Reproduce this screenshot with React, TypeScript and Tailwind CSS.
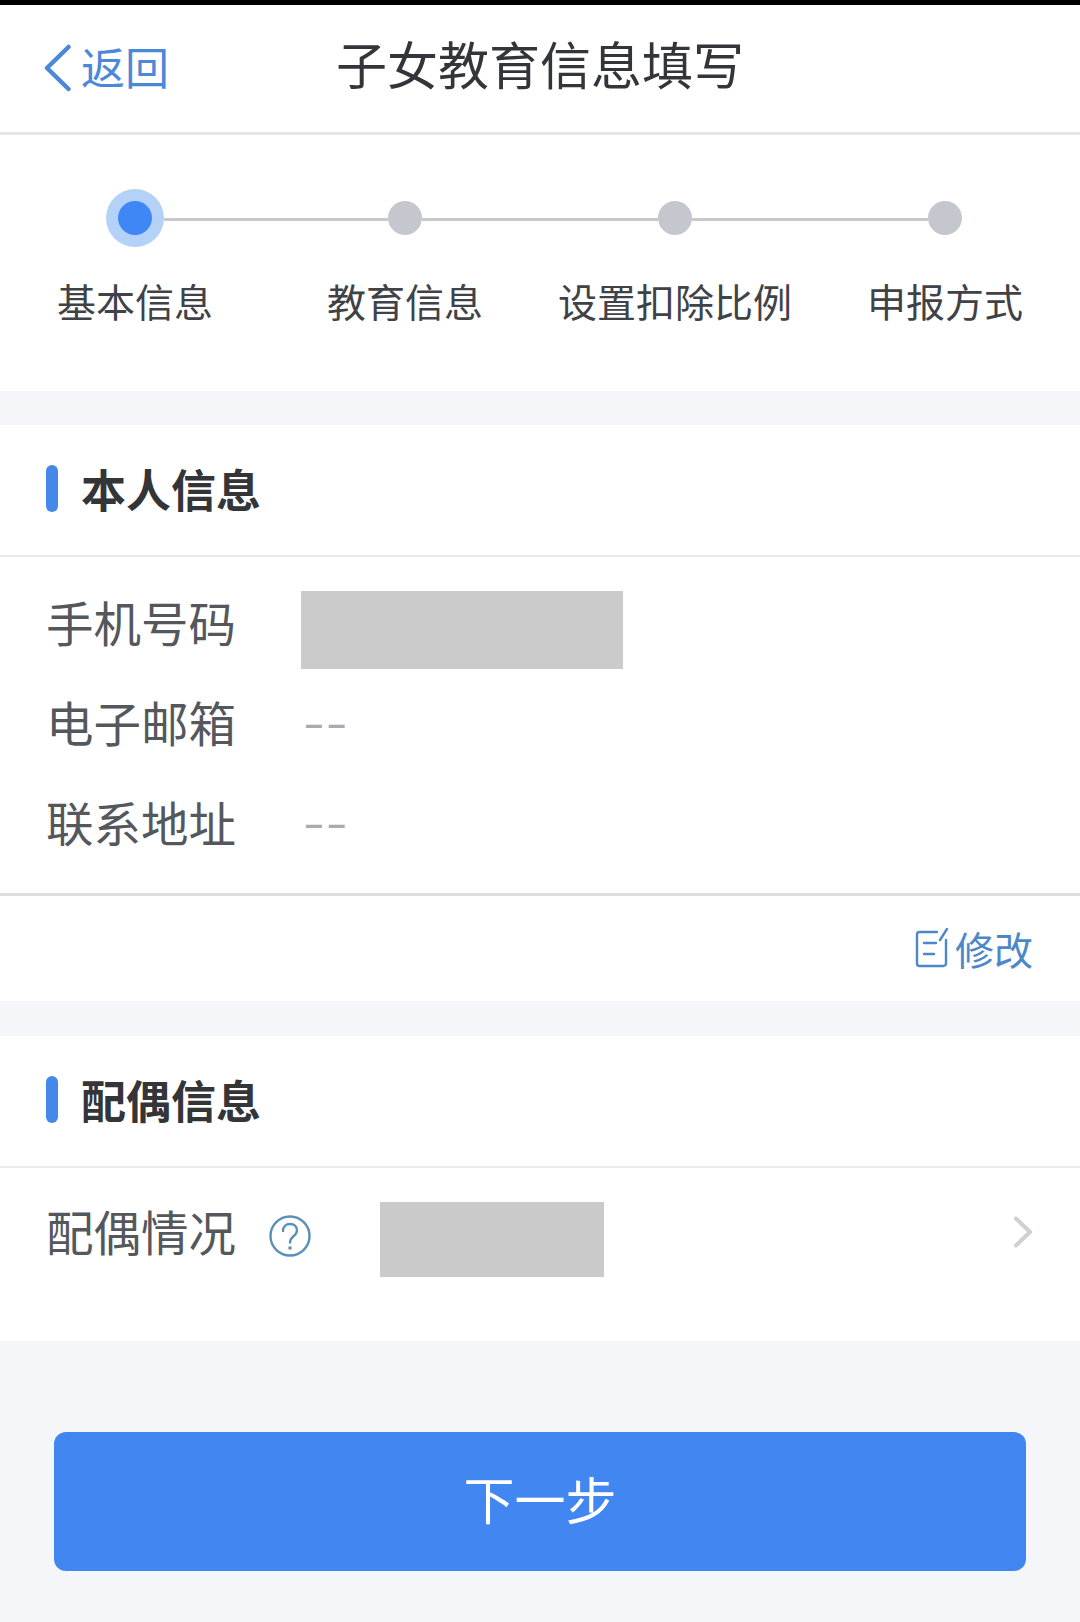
const font = { fontFamily: '"Noto Sans CJK SC", "Noto Sans", sans-serif' };

function Step({ label, active, first, last }: { label: string; active?: boolean; first?: boolean; last?: boolean }) {
  return (
    <div className="flex flex-col items-center">
      <div className="flex h-[57px] w-full items-center">
        <div className={`mt-[3px] h-[3px] flex-1 ${first ? "" : "bg-[#c6c8cc]"}`} />
        {active ? (
          <div className="flex h-[58px] w-[58px] items-center justify-center rounded-full bg-[#b4d2f8]">
            <div className="h-[34px] w-[34px] rounded-full bg-[#3f87f5]" />
          </div>
        ) : (
          <div className="h-[34px] w-[34px] rounded-full bg-[#c4c7cd]" />
        )}
        <div className={`mt-[3px] h-[3px] flex-1 ${last ? "" : "bg-[#c6c8cc]"}`} />
      </div>
      <div className="mt-[32px] whitespace-nowrap text-[39px] leading-[44px] text-[#3f4247]">{label}</div>
    </div>
  );
}

function SectionTitle({ children }: { children: string }) {
  return (
    <div className="flex h-[132px] items-center gap-[23px] border-b-2 border-[#ebebeb] pl-[46px]">
      <div className="mb-[4px] h-[47px] w-[12px] rounded-full bg-[#4488ea]" />
      <div className="mb-[3px] text-[45px] font-bold leading-[52px] text-[#333538]">{children}</div>
    </div>
  );
}

function Row({ label, children }: { label: string; children: React.ReactNode }) {
  return (
    <div className="flex h-[100px] items-center pl-[46px]">
      <div className="mb-[5px] w-[255px] whitespace-nowrap text-[47.5px] leading-[56px] text-[#54575c]">{label}</div>
      {children}
    </div>
  );
}

function Dash() {
  return (
    <div className="pl-[4px] text-[32px] font-bold leading-[40px] tracking-[5px] text-[#a9abb0]" style={{ fontFamily: '"Liberation Sans", sans-serif' }}>
      ––
    </div>
  );
}

export default function App() {
  return (
    <div className="flex min-h-[1622px] w-[1080px] flex-col bg-[#f4f6fa]" style={font}>
      <div className="h-[5px] bg-black" />
      <header className="grid h-[130px] grid-cols-[1fr_auto_1fr] items-center border-b-[3px] border-[#e6e6e6] bg-white">
        <div className="flex items-center pl-[43px] text-[#4c88d8]">
          <svg className="mb-[2px]" width="30" height="48" viewBox="0 0 30 48" fill="none" stroke="currentColor" strokeWidth="4.5" strokeLinecap="round" strokeLinejoin="round">
            <path d="M25.5 3 4 24l21.5 21" />
          </svg>
          <span className="mb-[6px] ml-[8px] text-[44px] leading-[50px]">返回</span>
        </div>
        <div className="mb-[12px] text-[51px] leading-[60px] text-[#33353a]">子女教育信息填写</div>
        <div />
      </header>

      <section className="h-[256px] bg-white pt-[54px]">
        <div className="grid grid-cols-4">
          <Step label="基本信息" active first />
          <Step label="教育信息" />
          <Step label="设置扣除比例" />
          <Step label="申报方式" last />
        </div>
      </section>

      <section className="mt-[34px] bg-white">
        <SectionTitle>本人信息</SectionTitle>
        <div className="border-b-[3px] border-[#dddddd] pb-[19px] pt-[17px]">
          <Row label="手机号码">
            <div className="mt-[11px] h-[78px] w-[322px] bg-[#cbcbcb]" />
          </Row>
          <Row label="电子邮箱"><Dash /></Row>
          <Row label="联系地址"><Dash /></Row>
        </div>
        <div className="flex h-[105px] items-center justify-end gap-[6px] pr-[47px] text-[#4c88c8]">
          <svg className="mb-[2px]" width="34" height="40" viewBox="0 0 34 40" fill="none" stroke="currentColor" strokeWidth="2.4" strokeLinecap="round" strokeLinejoin="round">
            <path d="M22 4H4.5A2.5 2.5 0 0 0 2 6.5v29A2.5 2.5 0 0 0 4.5 38h24a2.5 2.5 0 0 0 2.5-2.500V12" />
            <path d="M9 15h12M9 26h10M25 12 32 1" />
          </svg>
          <span className="mb-[2px] text-[39px] leading-[46px]">修改</span>
        </div>
      </section>

      <section className="mt-[35px] bg-white">
        <SectionTitle>配偶信息</SectionTitle>
        <div className="flex h-[173px] items-center pl-[46px] pr-[47px]">
          <div className="mb-[48px] flex items-center">
            <div className="w-[192px] whitespace-nowrap text-[47.5px] leading-[56px] text-[#54575c]">配偶情况</div>
            <svg className="ml-[31px] mt-[10px]" width="42" height="42" viewBox="0 0 42 42" fill="none" stroke="#5a8fb8" strokeWidth="2.4">
              <circle cx="21" cy="21" r="19.5" />
              <path d="M14 16c0-4.500 3-7 7-7s7 2.500 7 6.500c0 5.500-7 6-7 12" strokeLinecap="round" />
              <circle cx="21" cy="33" r="1.800" fill="#5a8fb8" stroke="none" />
            </svg>
          </div>
          <div className="mb-[31px] ml-[69px] h-[75px] w-[224px] bg-[#cacaca]" />
          <svg className="mb-[46px] ml-auto" width="20" height="32" viewBox="0 0 20 32" fill="none" stroke="#cfd0d2" strokeWidth="4" strokeLinecap="round" strokeLinejoin="round">
            <path d="M3 2.500 17 16 3 29.500" />
          </svg>
        </div>
      </section>

      <div className="mt-[91px] px-[54px]">
        <button className="flex h-[139px] w-full items-center justify-center rounded-[12px] bg-[#4286f2] pb-[6px] text-[51px] text-white">下一步</button>
      </div>
    </div>
  );
}
